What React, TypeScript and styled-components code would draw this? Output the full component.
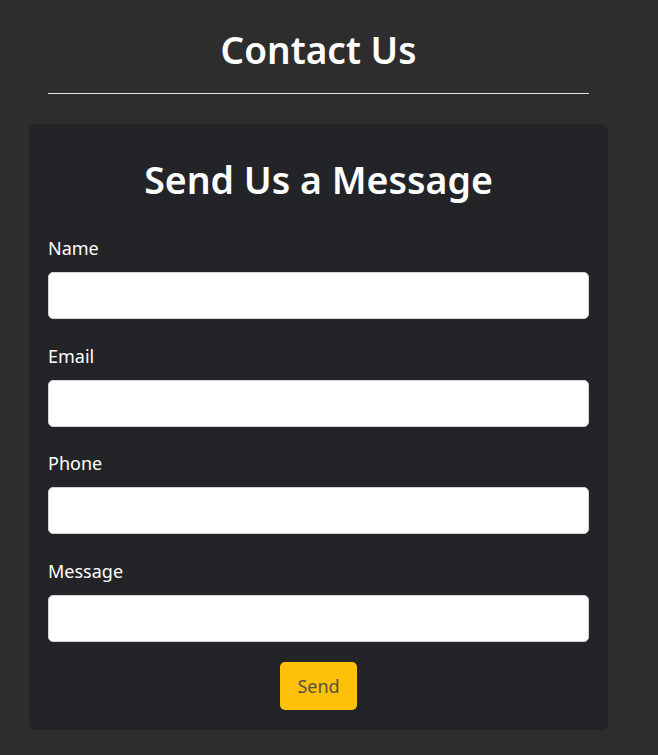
import React from "react";
import styled, { createGlobalStyle } from "styled-components";

const Global = createGlobalStyle`
  html, body { margin: 0; padding: 0; }
  body {
    background: #2d2d2d;
    font-family: "Noto Sans", "Open Sans", sans-serif;
    color: #fff;
  }
  * { box-sizing: border-box; }
`;

const Page = styled.div`
  width: 579px;
  margin-left: 29px;
  padding-top: 26px;
  padding-bottom: 26px;
`;

const Title = styled.h1`
  margin: 0;
  text-align: center;
  font-size: 37px;
  font-weight: 600;
  line-height: 48px;
  color: #fff;
`;

const Rule = styled.hr`
  margin: 19px 19px 30px;
  border: 0;
  border-top: 1px solid #e4e4e4;
  height: 0;
`;

const Card = styled.form`
  background: #232427;
  border-radius: 6px;
  padding: 34px 19px 20px;
  display: flex;
  flex-direction: column;
`;

const CardTitle = styled.h2`
  margin: 0 0 34px;
  text-align: center;
  font-size: 37.5px;
  font-weight: 600;
  line-height: 43px;
  color: #fff;
`;

const Group = styled.div<{ $last?: boolean }>`
  display: flex;
  flex-direction: column;
  margin-bottom: ${(p) => (p.$last ? "20px" : "23.5px")};
`;

const Label = styled.label`
  font-size: 18px;
  line-height: 27px;
  margin-bottom: 10px;
  color: #fff;
`;

const Input = styled.input`
  height: 47px;
  width: 100%;
  border: 1px solid #ced4da;
  border-radius: 5px;
  background: #fff;
  padding: 6px 12px;
  font-size: 16px;
  font-family: inherit;
`;

const Actions = styled.div`
  display: flex;
  justify-content: center;
`;

const Button = styled.button`
  height: 48px;
  width: 77px;
  background: #ffc107;
  border: none;
  border-radius: 5px;
  color: #555048;
  font-family: inherit;
  font-size: 18px;
  cursor: pointer;
`;

const fields = ["Name", "Email", "Phone", "Message"];

export default function App() {
  return (
    <>
      <Global />
      <Page>
        <Title>Contact Us</Title>
        <Rule />
        <Card onSubmit={(e) => e.preventDefault()}>
          <CardTitle>Send Us a Message</CardTitle>
          {fields.map((f, i) => (
            <Group key={f} $last={i === fields.length - 1}>
              <Label htmlFor={f}>{f}</Label>
              <Input id={f} type="text" />
            </Group>
          ))}
          <Actions>
            <Button type="submit">Send</Button>
          </Actions>
        </Card>
      </Page>
    </>
  );
}
